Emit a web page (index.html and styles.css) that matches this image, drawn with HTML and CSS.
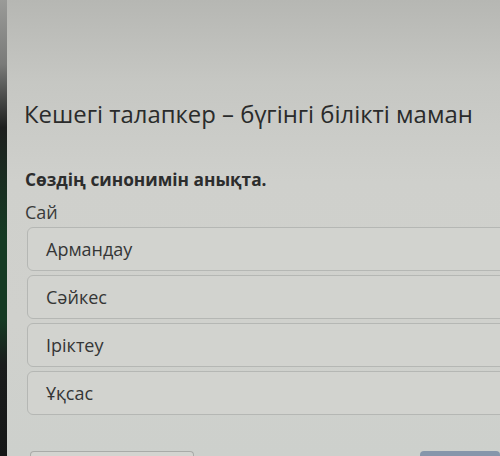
FILE: index.html
```html
<!DOCTYPE html>
<html lang="kk">
<head>
<meta charset="utf-8">
<link rel="stylesheet" href="styles.css">
</head>
<body>
<div class="screen">
  <div class="edge"></div>
  <main class="content">
    <h1 class="title">Кешегі талапкер – бүгінгі білікті маман</h1>
    <p class="question">Сөздің синонимін анықта.</p>
    <p class="word">Сай</p>
    <ul class="options">
      <li class="option">Армандау</li>
      <li class="option">Сәйкес</li>
      <li class="option">Іріктеу</li>
      <li class="option">Ұқсас</li>
    </ul>
    <div class="actions">
      <span class="btn btn-outline"></span>
      <span class="btn btn-primary"></span>
    </div>
  </main>
</div>
</body>
</html>
```
FILE: styles.css
```css
html, body {
  margin: 0;
  padding: 0;
  width: 500px;
  height: 456px;
  overflow: hidden;
}
body {
  font-family: "Open Sans", "Noto Sans", sans-serif;
  color: #2c2d2d;
}
.screen {
  display: flex;
  width: 500px;
  height: 456px;
  background: linear-gradient(180deg, #b6b7b3 0%, #c6c7c3 18%, #cfd0cc 40%, #d0d1cd 70%, #cdd0cc 100%);
}
.edge {
  width: 7px;
  flex: none;
  background: linear-gradient(180deg, #9a9b98 0%, #7a7b79 14%, #1d1f1e 28%, #153a23 52%, #153a23 70%, #1a1c1c 80%, #151717 100%);
}
.content {
  flex: 1;
  padding: 97px 0 0 17px;
  display: flex;
  flex-direction: column;
  min-width: 0;
}
.title {
  margin: 0;
  font-size: 23.9px;
  font-weight: 400;
  line-height: 34px;
  color: #2a2b2b;
  white-space: nowrap;
}
.question {
  margin: 37px 0 0 1px;
  font-size: 17.3px;
  font-weight: 700;
  line-height: 24px;
  color: #2c2d2d;
}
.word {
  margin: 8px 0 0 1px;
  font-size: 18px;
  line-height: 24px;
  color: #3a3b3b;
}
.options {
  list-style: none;
  margin: 3px -20px 0 3px;
  padding: 0;
  display: flex;
  flex-direction: column;
  gap: 4px;
}
.option {
  height: 44px;
  box-sizing: border-box;
  border: 1px solid #b5b7b4;
  border-radius: 6px;
  background: #d2d3cf;
  padding: 0 0 0 18px;
  display: flex;
  align-items: center;
  font-size: 18px;
  color: #353636;
}
.actions {
  margin-top: 36px;
  display: flex;
  justify-content: space-between;
  margin-left: 6px;
}
.btn {
  display: block;
  height: 20px;
  border-radius: 4px 4px 0 0;
}
.btn-outline {
  width: 162px;
  border: 1px solid #a9aba8;
  border-bottom: none;
  background: #d3d4d0;
}
.btn-primary {
  width: 80px;
  background: #8696ab;
}
```
